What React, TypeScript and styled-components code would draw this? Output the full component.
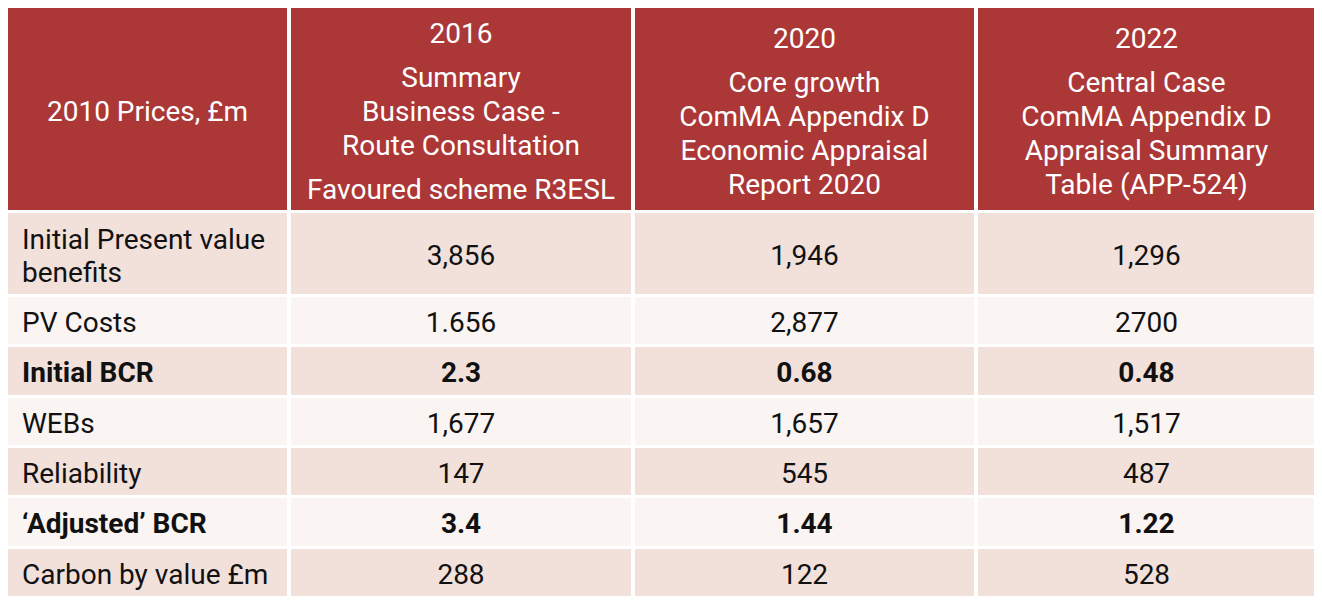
import styled, { createGlobalStyle } from 'styled-components';

const GlobalStyle = createGlobalStyle`
    body {
        margin: 8px;
        background: #ffffff;
        font-family: Roboto, "Liberation Sans", Arial, sans-serif;
    }
`;

type Row = {
    label: string;
    values: string[];
    bold?: boolean;
};

const headers: string[][][] = [
    [['2016'], ['Summary', 'Business Case -', 'Route Consultation'], ['Favoured scheme R3ESL']],
    [['2020'], ['Core growth', 'ComMA Appendix D', 'Economic Appraisal', 'Report 2020']],
    [['2022'], ['Central Case', 'ComMA Appendix D', 'Appraisal Summary', 'Table (APP-524)']],
];

const rows: Row[] = [
    { label: 'Initial Present value benefits', values: ['3,856', '1,946', '1,296'] },
    { label: 'PV Costs', values: ['1.656', '2,877', '2700'] },
    { label: 'Initial BCR', values: ['2.3', '0.68', '0.48'], bold: true },
    { label: 'WEBs', values: ['1,677', '1,657', '1,517'] },
    { label: 'Reliability', values: ['147', '545', '487'] },
    { label: '\u2018Adjusted\u2019 BCR', values: ['3.4', '1.44', '1.22'], bold: true },
    { label: 'Carbon by value £m', values: ['288', '122', '528'] },
];

const App = () => {
    return (
        <>
            <GlobalStyle />
            <Table>
                <HeadCell>
                    <HeadPara>2010 Prices, £m</HeadPara>
                </HeadCell>
                {headers.map((paras, i) => (
                    <HeadCell key={i}>
                        {paras.map((lines, j) => (
                            <HeadPara key={j}>
                                {lines.map((line) => (
                                    <span key={line}>{line}</span>
                                ))}
                            </HeadPara>
                        ))}
                    </HeadCell>
                ))}
                {rows.map((row, i) => (
                    <RowGroup key={row.label}>
                        <LabelCell $shade={i % 2 === 0} $bold={row.bold}>
                            {row.label}
                        </LabelCell>
                        {row.values.map((v, j) => (
                            <ValueCell key={j} $shade={i % 2 === 0} $bold={row.bold}>
                                {v}
                            </ValueCell>
                        ))}
                    </RowGroup>
                ))}
            </Table>
        </>
    );
};

const Table = styled.div`
    display: grid;
    width: 1307px;
    height: 588px;
    grid-template-columns: 279px 340px 339px 1fr;
    grid-template-rows: 202px 81px repeat(6, 1fr);
    column-gap: 4px;
    row-gap: 3px;
`;

// lets each body row's cells sit directly in the table grid
const RowGroup = styled.div`
    display: contents;
`;

const HeadCell = styled.div`
    background: #ac3737;
    color: #ffffff;
    display: flex;
    flex-direction: column;
    justify-content: center;
    align-items: center;
    gap: 10px;
    padding-top: 6px;
    text-align: center;
    font-size: 28px;
`;

const HeadPara = styled.div`
    display: flex;
    flex-direction: column;
    line-height: 34px;
    white-space: nowrap;
`;

const Cell = styled.div<{ $shade?: boolean; $bold?: boolean }>`
    background: ${(p) => (p.$shade ? '#f2e0db' : '#faf4f2')};
    color: #111111;
    font-size: 28px;
    line-height: 33px;
    font-weight: ${(p) => (p.$bold ? 700 : 400)};
    display: flex;
    align-items: center;
    padding-top: 4px;
`;

const LabelCell = styled(Cell)`
    padding-left: 14px;
    padding-right: 14px;
`;

const ValueCell = styled(Cell)`
    justify-content: center;
`;

export default App;
